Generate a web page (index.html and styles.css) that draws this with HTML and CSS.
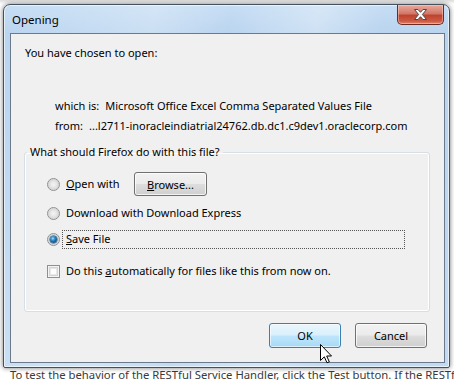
FILE: index.html
```html
<!DOCTYPE html>
<html>
<head>
<meta charset="utf-8">
<link rel="stylesheet" href="styles.css">
</head>
<body>
<div class="screen">
  <div class="window">
    <div class="titlebar">
      <span class="title">Opening</span>
      <button class="close" aria-label="Close">
        <svg width="13" height="11" viewBox="0 0 13 11"><polygon points="0.5,0.5 4,0.5 6.5,3.3 9,0.5 12.5,0.5 8.4,5.5 12.5,10.5 9,10.5 6.5,7.7 4,10.5 0.5,10.5 4.6,5.5" fill="#fff" stroke="#4a4a4a" stroke-width="1" stroke-linejoin="round"/></svg>
      </button>
    </div>
    <div class="client">
      <p class="intro">You have chosen to open:</p>
      <div class="info">
        <div class="row"><span class="key">which is:</span><span>Microsoft Office Excel Comma Separated Values File</span></div>
        <div class="row"><span class="key">from:</span><span>...l2711-inoracleindiatrial24762.db.dc1.c9dev1.oraclecorp.com</span></div>
      </div>
      <fieldset class="group">
        <legend>What should Firefox do with this file?</legend>
        <div class="options">
          <div class="option first">
            <span class="radio"></span>
            <span class="label open-label"><u>O</u>pen with</span>
            <button class="btn browse"><u>B</u>rowse...</button>
          </div>
          <div class="option second">
            <span class="radio"></span>
            <span class="label">Download with Download Express</span>
          </div>
          <div class="option third">
            <span class="radio checked"></span>
            <span class="label focus"><u>S</u>ave File</span>
          </div>
          <div class="option fourth">
            <span class="checkbox"></span>
            <span class="label">Do this <u>a</u>utomatically for files like this from now on.</span>
          </div>
        </div>
      </fieldset>
      <div class="actions">
        <button class="btn default">OK</button>
        <button class="btn">Cancel</button>
      </div>
    </div>
  </div>
  <p class="behind">To test the behavior of the RESTful Service Handler, click the Test button. If the RESTf</p>
  <svg class="cursor" width="13" height="20" viewBox="0 0 13 20"><path d="M0.5,0.5 L0.5,16.5 L4.3,12.8 L7,18.8 L9.3,17.8 L6.7,12 L11.5,12 Z" fill="#fff" stroke="#000" stroke-width="1" stroke-linejoin="miter"/></svg>
</div>
</body>
</html>
```
FILE: styles.css
```css
* { box-sizing: border-box; }
html, body { margin: 0; padding: 0; }
body {
  width: 454px;
  height: 382px;
  overflow: hidden;
  background: #ffffff;
  font-family: "Noto Sans", "Open Sans", sans-serif;
  font-size: 11px;
  color: #000;
}
.screen {
  position: relative;
  width: 454px;
  height: 382px;
  overflow: hidden;
  padding-top: 4px;
  padding-left: 3px;
  background: linear-gradient(#dcdcdc, #ffffff 4px);
}
.window {
  position: relative;
  z-index: 1;
  width: 447px;
  height: 364px;
  display: flex;
  flex-direction: column;
  padding: 0 4px 4px 6px;
  border: 1px solid #44505c;
  border-radius: 7px 7px 2px 2px;
  background:
    linear-gradient(100deg, rgba(255,255,255,0) 0%, rgba(255,255,255,0.25) 30%, rgba(255,255,255,0) 45%, rgba(255,255,255,0.3) 62%, rgba(255,255,255,0) 75%),
    linear-gradient(#c6ddf4, #b9d4ef 30px, #c3dbf2);
  box-shadow: 0 0 5px rgba(0,0,0,0.55), inset 0 0 0 1px rgba(255,255,255,0.6);
}
.titlebar {
  height: 28px;
  display: flex;
  align-items: flex-start;
  justify-content: space-between;
}
.title {
  padding-left: 2px;
  padding-top: 7px;
  line-height: 16px;
  font-size: 11.5px;
  color: #000;
}
.close {
  width: 47px;
  height: 20px;
  margin: 0 1px 0 0;
  padding: 0;
  display: flex;
  align-items: center;
  justify-content: center;
  border: 1px solid #6b2a22;
  border-top: none;
  border-radius: 0 0 5px 5px;
  background: linear-gradient(#e9a99b, #d2786a 45%, #c0432f 55%, #cc5a44 85%, #e08a6e);
  box-shadow: inset 0 0 0 1px rgba(255,220,210,0.45);
}
.client {
  flex: 1;
  border: 1px solid #6a7a8c;
  background: #f0f0f0;
  display: flex;
  flex-direction: column;
}
.intro {
  margin: 11px 0 0 14px;
  line-height: 16px;
}
.info {
  margin: 37px 0 0 44px;
  display: flex;
  flex-direction: column;
  gap: 4px;
}
.row {
  line-height: 16px;
  white-space: nowrap;
}
.key { margin-right: 6px; }
.group {
  margin: 10px 0 0 13px;
  width: 406px;
  height: 168px;
  padding: 0;
  border: 1px solid #d5dfe5;
  border-radius: 3px;
  box-shadow: inset 0 0 0 1px #ffffff;
}
.group legend {
  margin-left: 2px;
  padding: 0 3px;
  line-height: 16px;
}
.options {
  display: flex;
  flex-direction: column;
  padding: 12px 0 0 22px;
}
.option {
  display: flex;
  align-items: center;
}
.option.first { height: 24px; }
.option.second { height: 18px; margin-top: 8px; }
.option.third { height: 19px; margin-top: 8px; }
.option.fourth { height: 16px; margin-top: 14px; }
.radio {
  width: 13px;
  height: 13px;
  border-radius: 50%;
  border: 1px solid #8f9090;
  background: radial-gradient(circle at 50% 50%, #f4f4f4 0, #e6e6e6 3px, #d6d6d6 5px, #f8f8f8 6px);
  flex: none;
  display: flex;
  align-items: center;
  justify-content: center;
}
.radio.checked::after {
  content: "";
  width: 7px;
  height: 7px;
  border-radius: 50%;
  background: radial-gradient(circle at 40% 35%, #b5e3ff 0, #3aa0dc 1.5px, #1d5f97 3.5px);
  box-shadow: 0 0 0 0.5px #134d7c;
}
.checkbox {
  width: 13px;
  height: 13px;
  border: 1px solid #8f8f8f;
  background: #fdfdfd;
  box-shadow: inset 0 0 0 1px #f4f4f4, inset 0 0 0 2px #d3d3d3, inset 0 0 0 3px #e8e8e8;
  flex: none;
}
.label {
  margin-left: 2px;
  padding: 0 3px;
  border: 1px dotted transparent;
  line-height: 16px;
  white-space: nowrap;
}
.label.open-label { width: 72px; }
.label.focus {
  width: 343px;
  height: 19px;
  border-color: #555;
}
.btn {
  font-family: inherit;
  font-size: 11px;
  color: #000;
  height: 24px;
  padding: 0;
  border: 1px solid #707070;
  border-radius: 3px;
  background: linear-gradient(#f2f2f2, #ebebeb 48%, #dddddd 52%, #cfcfcf);
  box-shadow: inset 0 0 0 1px rgba(255,255,255,0.75);
}
.browse { width: 73px; }
.actions {
  margin-top: 11px;
  display: flex;
  justify-content: flex-end;
  gap: 14px;
  padding-right: 17px;
}
.actions .btn { width: 72px; height: 25px; }
.btn.default {
  border-color: #3c7fb1;
  background: linear-gradient(#eaf6fd, #d9f0fc 48%, #bee6fd 52%, #a7d9f5);
  box-shadow: inset 0 0 0 1px rgba(255,255,255,0.6);
}
.behind {
  margin: 0;
  padding-left: 7px;
  line-height: 14px;
  font-size: 11.3px;
  color: #3a3a3a;
  white-space: nowrap;
}
.cursor {
  position: absolute;
  left: 320px;
  top: 344px;
  z-index: 2;
}
```
